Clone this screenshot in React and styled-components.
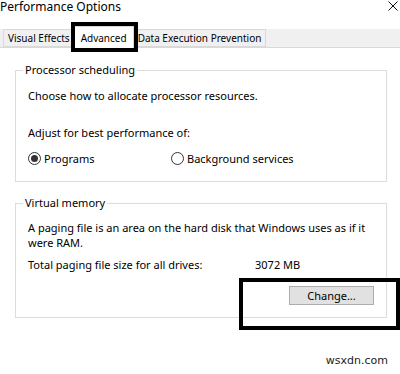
import React from "react";
import styled, { createGlobalStyle } from "styled-components";

const Global = createGlobalStyle`
  html, body {
    margin: 0;
    padding: 0;
    background: #ffffff;
  }
  body {
    font-family: "Noto Sans", "Open Sans", sans-serif;
    font-size: 11px;
    color: #000;
  }
`;

const Window = styled.div`
  width: 400px;
  height: 374px;
  overflow: hidden;
  background: #fff;
`;

const TitleBar = styled.div`
  height: 29px;
  display: flex;
  justify-content: space-between;
  align-items: flex-start;
`;

const Title = styled.div`
  font-size: 12px;
  line-height: 13px;
`;

const Close = styled.div`
  margin-top: -1px;
  margin-right: 2px;
  width: 10px;
  height: 10px;
`;

const TabStrip = styled.div`
  height: 18px;
  display: flex;
  align-items: flex-end;
  padding-left: 3px;
  background: #f0f0f0;
  border-bottom: 1px solid #d9d9d9;
`;

const Tab = styled.div`
  position: relative;
  height: ${(p) => (p.$active ? "22px" : "18px")};
  margin-bottom: ${(p) => (p.$active ? "-1px" : "0")};
  padding: 0 ${(p) => (p.$active ? "6px" : "4px")};
  display: flex;
  align-items: center;
  justify-content: center;
  box-sizing: border-box;
  white-space: nowrap;
  font-size: 10px;
  background: ${(p) => (p.$active ? "#ffffff" : "#f0f0f0")};
  border: 1px solid #d9d9d9;
  border-bottom: ${(p) => (p.$active ? "none" : "1px solid #d9d9d9")};
  z-index: ${(p) => (p.$marked ? 2 : 0)};
  outline: ${(p) => (p.$marked ? "4px solid #000" : "none")};
  & + & {
    border-left: none;
  }
`;

const Panel = styled.div`
  padding: 14px 13px 0 15px;
  display: flex;
  flex-direction: column;
  gap: 13px;
`;

const Group = styled.fieldset`
  margin: 0;
  width: 372px;
  box-sizing: border-box;
  border: 1px solid #dcdcdc;
  padding: ${(p) => p.$pad};
  display: flex;
  flex-direction: column;
`;

const Legend = styled.legend`
  padding: 0 2px;
  margin-left: -5px;
  line-height: 16px;
`;

const Line = styled.div`
  line-height: 15px;
  margin-top: ${(p) => p.$gap || 0}px;
`;

const RadioRow = styled.div`
  display: flex;
  margin-top: 11px;
`;

const RadioOption = styled.label`
  display: flex;
  align-items: center;
  gap: 3px;
  width: ${(p) => p.$width}px;
  line-height: 15px;
`;

const RadioDot = styled.span`
  width: 13px;
  height: 13px;
  box-sizing: border-box;
  border: 1px solid #333;
  border-radius: 50%;
  display: flex;
  align-items: center;
  justify-content: center;
  &::after {
    content: "";
    width: 7px;
    height: 7px;
    border-radius: 50%;
    background: ${(p) => (p.$checked ? "#333" : "transparent")};
  }
`;

const InfoRow = styled.div`
  display: flex;
  margin-top: 7px;
  line-height: 15px;
`;

const InfoLabel = styled.span`
  width: 227px;
`;

const ButtonRow = styled.div`
  display: flex;
  justify-content: flex-end;
  margin-top: 14px;
`;

const ButtonWrap = styled.div`
  position: relative;
`;

const Button = styled.div`
  width: 85px;
  height: 19px;
  box-sizing: border-box;
  border: 1px solid #adadad;
  background: #e1e1e1;
  display: flex;
  align-items: center;
  justify-content: center;
`;

const Mark = styled.div`
  position: absolute;
  top: -8px;
  left: -50px;
  right: -26px;
  bottom: -25px;
  border: 4px solid #000;
  pointer-events: none;
`;

const Watermark = styled.div`
  align-self: flex-end;
  margin: 23px -1px 0 0;
  font-family: "DejaVu Sans", Verdana, sans-serif;
  font-size: 11px;
  line-height: 14px;
  color: #222;
`;

export default function App() {
  return (
    <Window>
      <Global />
      <TitleBar>
        <Title>Performance Options</Title>
        <Close>
          <svg width="10" height="10" viewBox="0 0 10 10">
            <path d="M0.5 0.5 L9.5 9.5 M9.5 0.5 L0.5 9.5" stroke="#111" strokeWidth="1" />
          </svg>
        </Close>
      </TitleBar>
      <TabStrip>
        <Tab>Visual Effects</Tab>
        <Tab $active $marked>Advanced</Tab>
        <Tab>Data Execution Prevention</Tab>
      </TabStrip>
      <Panel>
        <Group $pad="10px 12px 15px 12px">
          <Legend>Processor scheduling</Legend>
          <Line>Choose how to allocate processor resources.</Line>
          <Line $gap={22}>Adjust for best performance of:</Line>
          <RadioRow>
            <RadioOption $width={143}>
              <RadioDot $checked />
              Programs
            </RadioOption>
            <RadioOption>
              <RadioDot />
              Background services
            </RadioOption>
          </RadioRow>
        </Group>
        <Group $pad="9px 12px 12px 12px">
          <Legend>Virtual memory</Legend>
          <Line>A paging file is an area on the hard disk that Windows uses as if it</Line>
          <Line>were RAM.</Line>
          <InfoRow>
            <InfoLabel>Total paging file size for all drives:</InfoLabel>
            <span>3072 MB</span>
          </InfoRow>
          <ButtonRow>
            <ButtonWrap>
              <Button>Change...</Button>
              <Mark />
            </ButtonWrap>
          </ButtonRow>
        </Group>
        <Watermark>wsxdn.com</Watermark>
      </Panel>
    </Window>
  );
}
